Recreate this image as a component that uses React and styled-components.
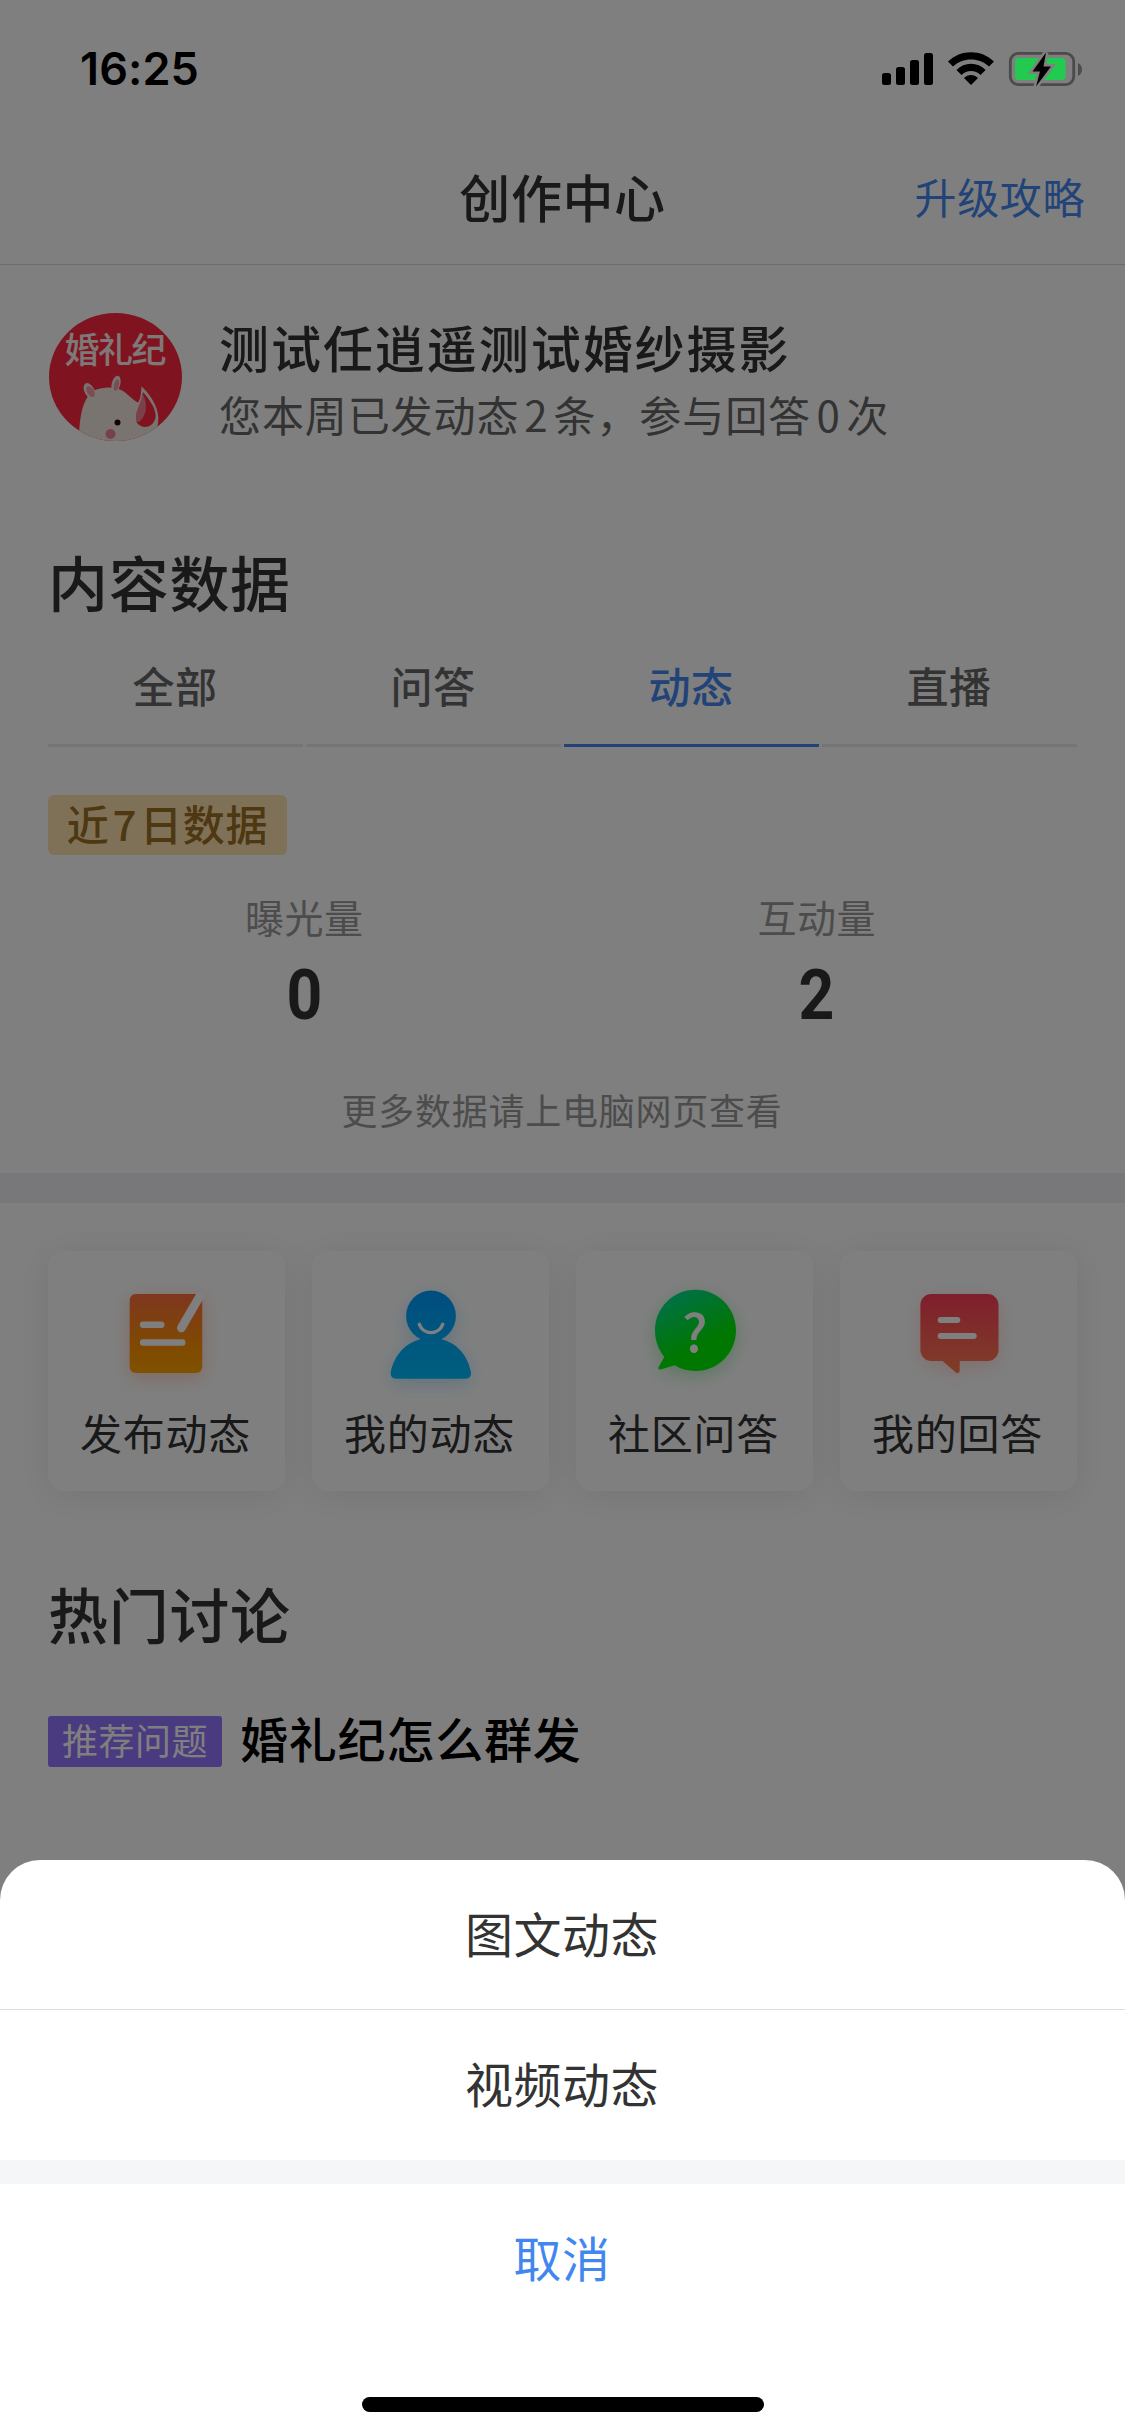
import React from 'react';
import styled, { createGlobalStyle } from 'styled-components';

const GlobalStyle = createGlobalStyle`
  *, *::before, *::after { box-sizing: border-box; }
  html, body { margin: 0; padding: 0; background: #fff; }
  body { font-family: "Noto Sans CJK SC", "Noto Sans", sans-serif; }
`;

const Screen = styled.main`
  position: relative;
  width: 1125px;
  height: 2436px;
  overflow: hidden;
  background: #fff;
  color: #333;
`;

const Mask = styled.div`
  position: absolute;
  inset: 0;
  z-index: 1;
  background: rgba(0, 0, 0, 0.5);
`;

const StatusBar = styled.header`
  position: relative;
  z-index: 2;
  display: flex;
  justify-content: space-between;
  align-items: center;
  height: 132px;
  padding: 6px 42px 0 80px;
  color: #000;
`;

const Clock = styled.span`
  font: 600 45px/60px Inter, "Liberation Sans", sans-serif;
  letter-spacing: 0.1px;
`;

const StatusIcons = styled.svg`
  display: block;
  width: 204px;
  height: 40px;
`;

const NavBar = styled.nav`
  display: grid;
  grid-template-columns: 1fr auto 1fr;
  align-items: center;
  height: 133px;
  padding: 0 40px 5px;
  border-bottom: 1px solid #d8d8d8;
`;

const NavTitle = styled.h1`
  grid-column: 2;
  margin: 0;
  font-size: 51px;
  font-weight: 500;
  line-height: 72px;
  letter-spacing: 0.6px;
`;

const NavLink = styled.a`
  justify-self: end;
  padding-top: 1px;
  font-size: 42px;
  line-height: 60px;
  letter-spacing: 0.6px;
  color: #4287f0;
`;

const Profile = styled.section`
  display: flex;
  align-items: center;
  gap: 37px;
  height: 222px;
  padding: 0 48px;
`;

const Avatar = styled.svg`
  flex: none;
  width: 134px;
  height: 128px;
  margin-top: 1px;
`;

const ProfileText = styled.div`
  display: flex;
  flex-direction: column;
  padding-top: 3px;
`;

const ProfileName = styled.h2`
  margin: 0;
  font-size: 50px;
  font-weight: 500;
  line-height: 72px;
  letter-spacing: 1.95px;
`;

const ProfileNote = styled.p`
  margin: 0;
  font-size: 42px;
  line-height: 64px;
  letter-spacing: 0.9px;
  color: #666;
`;

const Count = styled.span`
  margin: 0 ${(p) => p.$gap}px;
`;

const Section = styled.section`
  padding: 0 48px;
`;

const DataSection = styled(Section)`
  padding-top: 50px;
  padding-bottom: 34px;
`;

const Heading = styled.h2`
  margin: 0;
  font-size: 60px;
  font-weight: 500;
  line-height: 88px;
  letter-spacing: 0.7px;
`;

const Tabs = styled.div`
  display: grid;
  grid-template-columns: repeat(4, 1fr);
  gap: 3px;
  margin-top: 20px;
`;

const Tab = styled.div`
  height: 102px;
  padding-top: 10px;
  border-bottom: 3px solid ${(p) => (p.$active ? '#4287f0' : '#ebebeb')};
  color: ${(p) => (p.$active ? '#4287f0' : '#666')};
  font-size: 42px;
  font-weight: 500;
  line-height: 60px;
  letter-spacing: 0.5px;
  text-indent: -1px;
  text-align: center;
`;

const Period = styled.div`
  display: flex;
  align-items: center;
  justify-content: center;
  width: 239px;
  height: 60px;
  margin-top: 48px;
  padding-bottom: 5px;
  border-radius: 6px;
  background: #ffe2b0;
  color: #9c7024;
  font-size: 42px;
  font-weight: 500;
  line-height: 55px;
  letter-spacing: 0.7px;
`;

const Stats = styled.div`
  display: grid;
  grid-template-columns: 1fr 1fr;
  margin: 31px 4px 0 0;
`;

const Stat = styled.div`
  display: flex;
  flex-direction: column;
  align-items: center;
`;

const StatLabel = styled.span`
  font-size: 39px;
  line-height: 60px;
  letter-spacing: 0.5px;
  color: #999;
`;

const StatValue = styled.strong`
  font: 700 71px/84px Roboto, "Liberation Sans", sans-serif;
  margin-top: 7px;
  transform: scaleX(0.88);
`;

const Hint = styled.p`
  margin: 42px 0 0;
  font-size: 36px;
  line-height: 60px;
  letter-spacing: 0.75px;
  text-indent: -1px;
  text-align: center;
  color: #999;
`;

const Divider = styled.div`
  flex: none;
  height: ${(p) => p.$size}px;
  background: ${(p) => p.$color};
`;

const Shortcuts = styled.section`
  display: grid;
  grid-template-columns: repeat(4, 1fr);
  gap: 27px;
  padding: 48px 48px 0;
`;

const Shortcut = styled.div`
  display: flex;
  flex-direction: column;
  align-items: center;
  height: 240px;
  padding-top: 25px;
  border-radius: 15px;
  background: #fff;
  box-shadow: 0 4px 36px rgba(0, 0, 0, 0.09);
`;

const ShortcutIcon = styled.svg`
  display: block;
  width: 120px;
  height: 120px;
  overflow: visible;
  filter: drop-shadow(0 5px 9px ${(p) => p.$glow});
`;

const ShortcutLabel = styled.span`
  margin: 6px 2px 0 0;
  font-size: 42px;
  line-height: 60px;
  letter-spacing: 0.8px;
`;

const Topics = styled(Section)`
  padding-top: 78px;
`;

const Question = styled.div`
  display: flex;
  align-items: center;
  gap: 18px;
  margin-top: 47px;
`;

const Tag = styled.span`
  display: flex;
  align-items: center;
  justify-content: center;
  width: 174px;
  height: 51px;
  padding-bottom: 4px;
  border-radius: 3px;
  background: #9475ff;
  color: #fff;
  font-size: 36px;
  line-height: 47px;
  letter-spacing: 0.5px;
`;

const QuestionText = styled.span`
  font-size: 48px;
  font-weight: 500;
  line-height: 66px;
  letter-spacing: 0.8px;
  padding-bottom: 8px;
  color: #000;
`;

const Sheet = styled.div`
  position: absolute;
  z-index: 3;
  left: 0;
  right: 0;
  bottom: 0;
  display: flex;
  flex-direction: column;
  height: 576px;
  border-radius: 40px 40px 0 0;
  overflow: hidden;
  background: #fff;
`;

const SheetAction = styled.button`
  flex: none;
  height: ${(p) => p.$height || 149}px;
  padding: 0 1px 6px 0;
  border: 0;
  background: none;
  font: 400 48px/72px "Noto Sans CJK SC", sans-serif;
  letter-spacing: 0.5px;
  color: ${(p) => p.$color || '#333'};
`;

const HomeIndicator = styled.div`
  width: 402px;
  height: 15px;
  margin: auto auto 24px;
  border-radius: 8px;
  background: #000;
`;

const NoteIcon = () => (
  <ShortcutIcon viewBox="0 0 120 120" $glow="rgba(255,110,50,0.3)">
    <defs>
      <linearGradient id="note" x1="0" y1="0" x2="0" y2="1">
        <stop offset="0" stopColor="#ff6e3c" />
        <stop offset="0.7" stopColor="#ff9500" />
        <stop offset="1" stopColor="#ffa400" />
      </linearGradient>
    </defs>
    <rect x="22.7" y="18" width="72.5" height="79" rx="6" fill="url(#note)" />
    <g stroke="#fff" strokeLinecap="round" fill="none">
      <path d="M36.2 48.8H54.2M36.2 66.5H75.2" strokeWidth="6.6" />
      <path d="M92.6 20.5L74.3 52" strokeWidth="8.6" />
    </g>
  </ShortcutIcon>
);

const PersonIcon = () => (
  <ShortcutIcon viewBox="0 0 120 120" $glow="rgba(0,160,240,0.25)">
    <defs>
      <linearGradient id="person" x1="0" y1="15" x2="0" y2="103" gradientUnits="userSpaceOnUse">
        <stop offset="0" stopColor="#009bff" />
        <stop offset="1" stopColor="#00bdff" />
      </linearGradient>
    </defs>
    <g fill="url(#person)">
      <ellipse cx="60" cy="40" rx="24.9" ry="25.5" />
      <path d="M49 62H71V63.5C86 67 97 80 99.9 96C100.5 100 98.5 102.7 94.5 102.7H25.3C21.3 102.7 19.1 100 19.8 96C23 80 34 67 49 63.5Z" />
    </g>
    <path d="M48.3 48.3C50 53 54.5 56.6 60 56.6S70 53 71.7 48.3" fill="none" stroke="#fff" strokeWidth="3.4" strokeLinecap="round" />
  </ShortcutIcon>
);

const AskIcon = () => (
  <ShortcutIcon viewBox="0 0 120 120" $glow="rgba(0,200,40,0.3)">
    <defs>
      <linearGradient id="ask" x1="30" y1="22" x2="65" y2="95" gradientUnits="userSpaceOnUse">
        <stop offset="0" stopColor="#00e28c" />
        <stop offset="0.72" stopColor="#00ee00" />
        <stop offset="1" stopColor="#00ee00" />
      </linearGradient>
    </defs>
    <path
      d="M60.5 13.8C83 13.8 101 32 101 54.5S83 95 60.5 95C52.5 95 45.5 93 39.5 89.3L26 93.4C23.5 94 22.7 92.6 24 90.5L29.3 81C23.5 73.5 20 64.5 20 54.5C20 32 38 13.8 60.5 13.8Z"
      fill="url(#ask)"
    />
    <text x="59.8" y="75.6" textAnchor="middle" fontFamily="Noto Sans CJK SC, sans-serif" fontSize="52" fontWeight="500" fill="#fff">?</text>
  </ShortcutIcon>
);

const ReplyIcon = () => (
  <ShortcutIcon viewBox="0 0 120 120" $glow="rgba(255,80,70,0.2)">
    <defs>
      <linearGradient id="reply" x1="0" y1="0" x2="0" y2="1">
        <stop offset="0" stopColor="#ff3d5a" />
        <stop offset="1" stopColor="#ff7d50" />
      </linearGradient>
    </defs>
    <path
      d="M32.4 18H88.5C94.6 18 99.5 22.9 99.5 29V74C99.5 80.1 94.6 85 88.5 85H60.7V94.5C60.7 97 58.5 98 56.5 96.3L43.7 85H32.4C26.3 85 21.4 80.1 21.4 74V29C21.4 22.9 26.3 18 32.4 18Z"
      fill="url(#reply)"
    />
    <path d="M41.7 44H58.3M41.7 60H74.8" stroke="#fff" strokeWidth="6" strokeLinecap="round" />
  </ShortcutIcon>
);

const AvatarPicture = () => (
  <Avatar viewBox="0 0 134 128">
    <defs>
      <clipPath id="face"><ellipse cx="67.5" cy="64" rx="66.5" ry="64" /></clipPath>
    </defs>
    <g clipPath="url(#face)">
      <rect width="134" height="128" fill="#ff2840" />
      <text x="67.5" y="49.5" textAnchor="middle" fontFamily="Noto Sans CJK SC, sans-serif" fontSize="35" fontWeight="500" fill="#fff0f0" textLength="102">婚礼纪</text>
      <g fill="#f4e8e0">
        <path d="M31 128C31 104 35 83 47 77C56 73.500 68 73.500 75 78C82 83 86 88 90 89.500C93 86 93 79 93.500 73.500C104 83 112.500 98 110 110L107 128Z" />
        <ellipse cx="41.5" cy="78" rx="5" ry="8.5" transform="rotate(-28 41.5 78)" />
        <ellipse cx="68" cy="71" rx="4.3" ry="8.5" transform="rotate(14 68 71)" />
      </g>
      <g fill="#f59bab">
        <ellipse cx="42.500" cy="78.500" rx="3.500" ry="6" transform="rotate(-32 42.500 78.500)" />
        <ellipse cx="68.5" cy="72" rx="2.5" ry="6" transform="rotate(14 68.5 72)" />
      </g>
      <path d="M95 79C102 87 109 97 107.500 105C105 114.500 95 117 89 110C86 101 94 92 95 79Z" fill="#ff2840" />
      <path d="M94.500 80C100 91 99 103 91 109L88.500 108C85.500 100 93 92 94.500 80Z" fill="#f58296" />
      <circle cx="69.5" cy="109.5" r="3" fill="#2a0508" />
      <circle cx="62.5" cy="121" r="5" fill="#f57f98" />
    </g>
  </Avatar>
);

const StatusGlyphs = () => (
  <StatusIcons viewBox="879 49 204 40">
    <rect x="882" y="73" width="9" height="12" rx="2.5" />
    <rect x="896" y="67" width="9" height="18" rx="2.5" />
    <rect x="910" y="60" width="9" height="25" rx="2.5" />
    <rect x="924" y="53" width="9" height="32" rx="2.5" />
    <path d="M948 61.5C960.5 49 981.5 49 994 61.5L989 66.5C979.5 57 962.5 57 953 66.5Z" />
    <path d="M956.5 70C964.5 61.5 977.5 61.5 985.7 70L980.5 75C975.5 69.5 966.5 69.5 961.5 75Z" />
    <path d="M964 78C968 74 974 74 978 78L971 85Z" />
    <rect x="1010.3" y="53.3" width="63.4" height="31.4" rx="8" fill="none" stroke="#4b4b4b" strokeWidth="2.8" />
    <path d="M1078 63C1083.3 65.5 1083.3 73.5 1078 76Z" fill="#4b4b4b" />
    <rect x="1015" y="58" width="50.5" height="22" rx="4" fill="#22cb50" />
    <path d="M1046 52.5L1032.5 71.5H1040L1036 86.5L1051 66.5H1043.5Z" fill="#000" stroke="#808080" strokeWidth="5" paintOrder="stroke" />
  </StatusIcons>
);

const tabs = ['全部', '问答', '动态', '直播'];
const stats = [
  { label: '曝光量', value: 0 },
  { label: '互动量', value: 2 },
];
const shortcuts = [
  { label: '发布动态', Icon: NoteIcon },
  { label: '我的动态', Icon: PersonIcon },
  { label: '社区问答', Icon: AskIcon },
  { label: '我的回答', Icon: ReplyIcon },
];

export default function App() {
  return (
    <>
      <GlobalStyle />
      <Screen>
        <StatusBar>
          <Clock>16:25</Clock>
          <StatusGlyphs />
        </StatusBar>
        <NavBar>
          <NavTitle>创作中心</NavTitle>
          <NavLink>升级攻略</NavLink>
        </NavBar>
        <Profile>
          <AvatarPicture />
          <ProfileText>
            <ProfileName>测试任逍遥测试婚纱摄影</ProfileName>
            <ProfileNote>
              您本周已发动态<Count $gap={5}>2</Count>条，参与回答<Count $gap={5.5}>0</Count>次
            </ProfileNote>
          </ProfileText>
        </Profile>
        <DataSection>
          <Heading>内容数据</Heading>
          <Tabs>
            {tabs.map((name) => (
              <Tab key={name} $active={name === '动态'}>{name}</Tab>
            ))}
          </Tabs>
          <Period>近<Count $gap={3}>7</Count>日数据</Period>
          <Stats>
            {stats.map((s) => (
              <Stat key={s.label}>
                <StatLabel>{s.label}</StatLabel>
                <StatValue>{s.value}</StatValue>
              </Stat>
            ))}
          </Stats>
          <Hint>更多数据请上电脑网页查看</Hint>
        </DataSection>
        <Divider $size={30} $color="#f1f1f4" />
        <Shortcuts>
          {shortcuts.map(({ label, Icon }) => (
            <Shortcut key={label}>
              <Icon />
              <ShortcutLabel>{label}</ShortcutLabel>
            </Shortcut>
          ))}
        </Shortcuts>
        <Topics>
          <Heading>热门讨论</Heading>
          <Question>
            <Tag>推荐问题</Tag>
            <QuestionText>婚礼纪怎么群发</QuestionText>
          </Question>
        </Topics>
        <Mask />
        <Sheet>
          <SheetAction>图文动态</SheetAction>
          <Divider $size={1} $color="#dcdcdc" />
          <SheetAction $height={150}>视频动态</SheetAction>
          <Divider $size={24} $color="#f5f6f8" />
          <SheetAction $height={150} $color="#4287f0">取消</SheetAction>
          <HomeIndicator />
        </Sheet>
      </Screen>
    </>
  );
}
